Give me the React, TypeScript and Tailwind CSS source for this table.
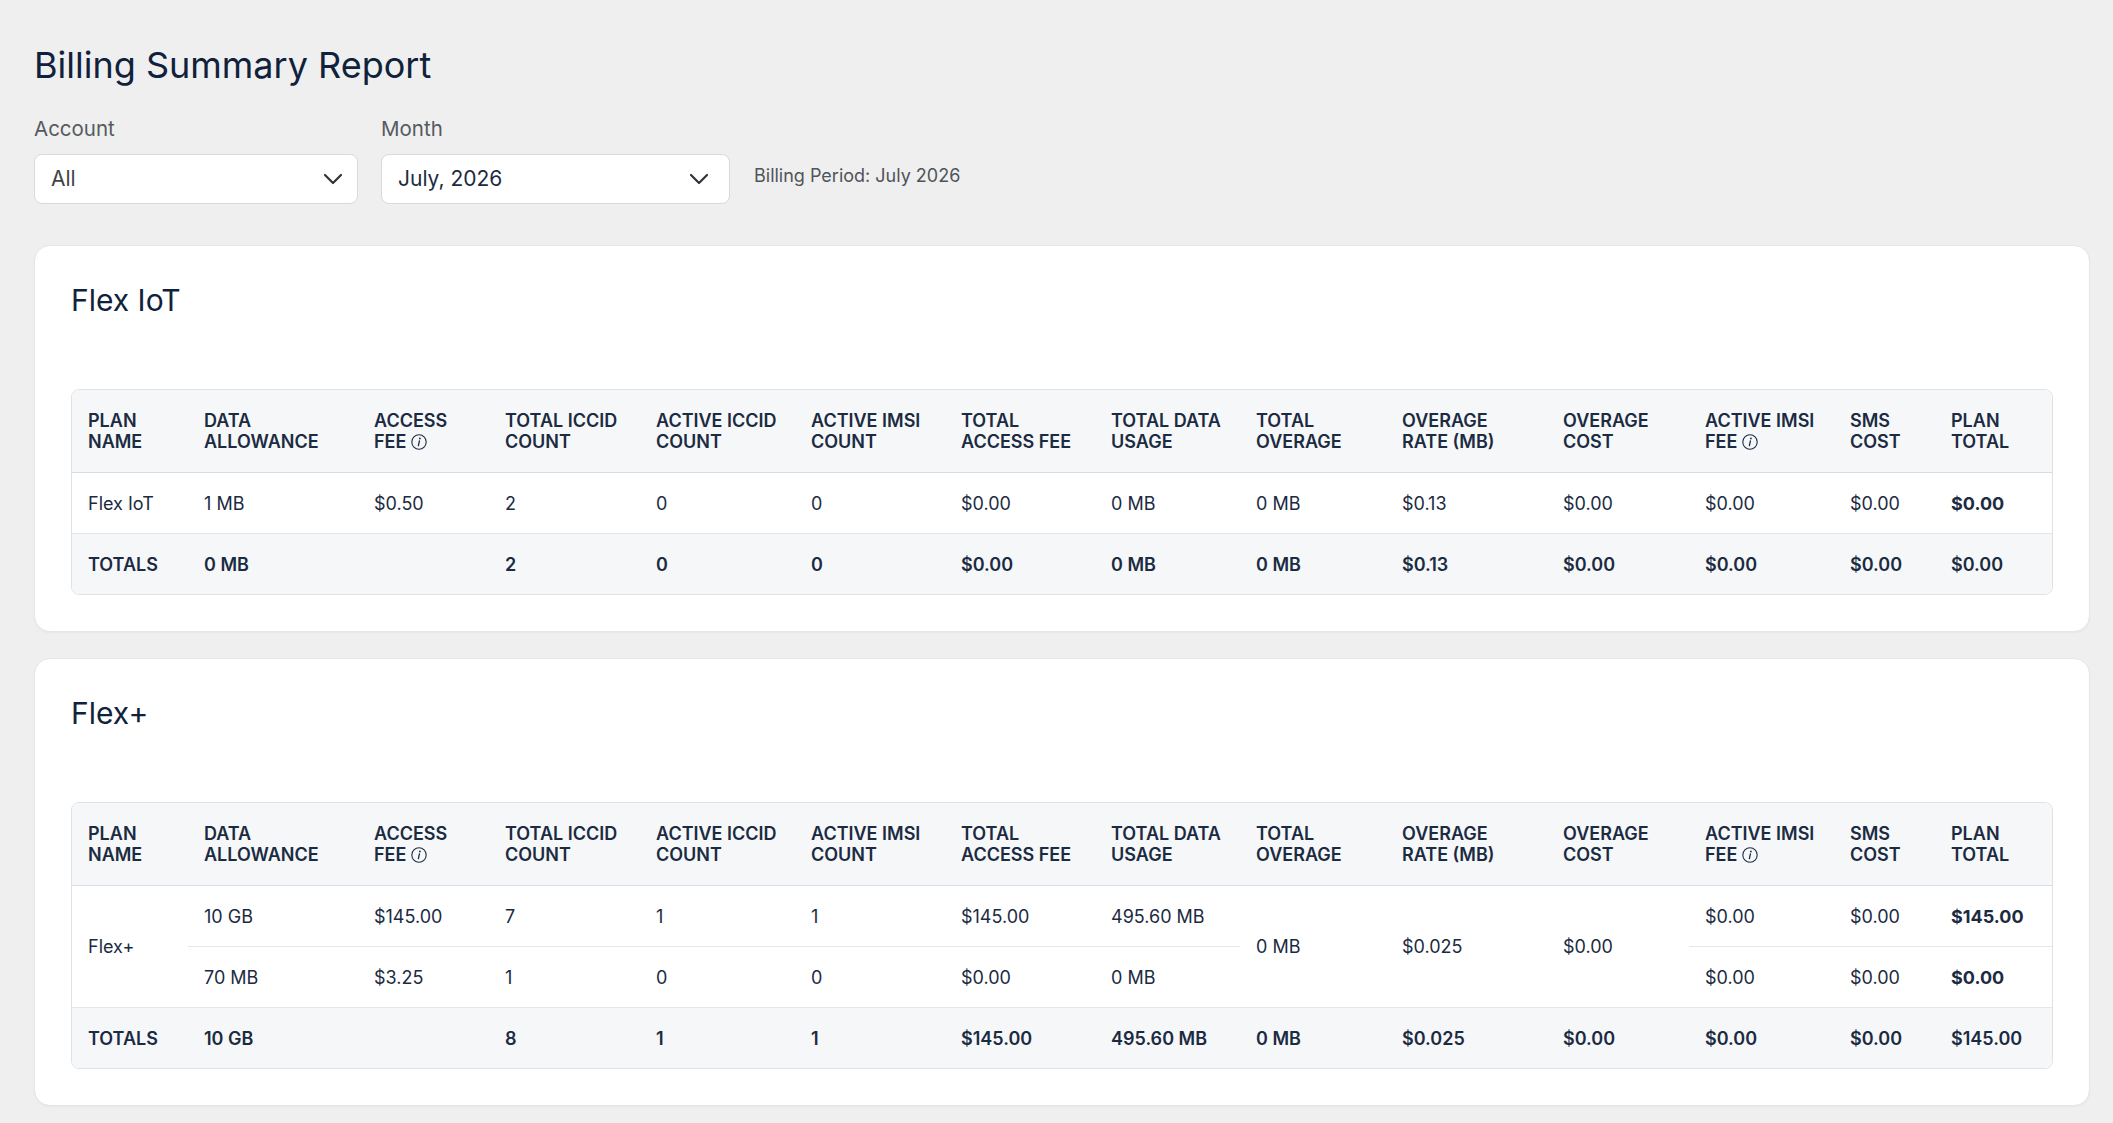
import { ChevronDown } from "lucide-react";

type Row = {
  data: string;
  access: string;
  totalIccid: string;
  activeIccid: string;
  activeImsi: string;
  totalAccess: string;
  usage: string;
  imsiFee: string;
  sms: string;
  total: string;
};

type Plan = {
  name: string;
  overage: string;
  rate: string;
  cost: string;
  rows: Row[];
  totals: string[];
};

const plans: Plan[] = [
  {
    name: "Flex IoT",
    overage: "0 MB",
    rate: "$0.13",
    cost: "$0.00",
    rows: [
      {
        data: "1 MB",
        access: "$0.50",
        totalIccid: "2",
        activeIccid: "0",
        activeImsi: "0",
        totalAccess: "$0.00",
        usage: "0 MB",
        imsiFee: "$0.00",
        sms: "$0.00",
        total: "$0.00",
      },
    ],
    totals: ["TOTALS", "0 MB", "", "2", "0", "0", "$0.00", "0 MB", "0 MB", "$0.13", "$0.00", "$0.00", "$0.00", "$0.00"],
  },
  {
    name: "Flex+",
    overage: "0 MB",
    rate: "$0.025",
    cost: "$0.00",
    rows: [
      {
        data: "10 GB",
        access: "$145.00",
        totalIccid: "7",
        activeIccid: "1",
        activeImsi: "1",
        totalAccess: "$145.00",
        usage: "495.60 MB",
        imsiFee: "$0.00",
        sms: "$0.00",
        total: "$145.00",
      },
      {
        data: "70 MB",
        access: "$3.25",
        totalIccid: "1",
        activeIccid: "0",
        activeImsi: "0",
        totalAccess: "$0.00",
        usage: "0 MB",
        imsiFee: "$0.00",
        sms: "$0.00",
        total: "$0.00",
      },
    ],
    totals: ["TOTALS", "10 GB", "", "8", "1", "1", "$145.00", "495.60 MB", "0 MB", "$0.025", "$0.00", "$0.00", "$0.00", "$145.00"],
  },
];

// [line 1, line 2, has info icon, column width]
const columns: [string, string, boolean, string][] = [
  ["PLAN", "NAME", false, "w-[116px]"],
  ["DATA", "ALLOWANCE", false, "w-[170px]"],
  ["ACCESS", "FEE", true, "w-[131px]"],
  ["TOTAL ICCID", "COUNT", false, "w-[151px]"],
  ["ACTIVE ICCID", "COUNT", false, "w-[155px]"],
  ["ACTIVE IMSI", "COUNT", false, "w-[150px]"],
  ["TOTAL", "ACCESS FEE", false, "w-[150px]"],
  ["TOTAL DATA", "USAGE", false, "w-[145px]"],
  ["TOTAL", "OVERAGE", false, "w-[146px]"],
  ["OVERAGE", "RATE (MB)", false, "w-[161px]"],
  ["OVERAGE", "COST", false, "w-[142px]"],
  ["ACTIVE IMSI", "FEE", true, "w-[145px]"],
  ["SMS", "COST", false, "w-[101px]"],
  ["PLAN", "TOTAL", false, "w-auto"],
];

function InfoIcon() {
  return (
    <svg viewBox="0 0 16 16" className="ml-[5px] inline-block h-[16px] w-[16px] align-[-2px]" fill="none">
      <circle cx="8" cy="8" r="7.2" stroke="currentColor" strokeWidth="1.1" />
      <circle cx="8.9" cy="4.5" r="0.9" fill="currentColor" />
      <path d="M8.4 6.9 L7.4 11.7" stroke="currentColor" strokeWidth="1.3" strokeLinecap="round" />
    </svg>
  );
}

function Select({ value, width, pad, muted }: { value: string; width: string; pad: string; muted?: boolean }) {
  return (
    <div
      className={`flex h-[50px] ${width} ${pad} items-center justify-between rounded-[8px] border border-[#d6d9dd] bg-white pl-[16px] text-[21px] ${
        muted ? "text-[#3f4247]" : "text-[#1b2b42]"
      }`}
    >
      <span>{value}</span>
      <ChevronDown className="h-[32px] w-[32px] text-[#2f3238]" strokeWidth={1.6} />
    </div>
  );
}

const cell = "whitespace-nowrap px-[16px] py-[19.5px] leading-[21px]";

function PlanCard({ plan }: { plan: Plan }) {
  const span = plan.rows.length;
  return (
    <section className="rounded-[16px] border border-[#e4e6e9] bg-white p-[36px] shadow-[0_1px_2px_rgba(0,0,0,0.04)]">
      <h2 className="mb-[71px] text-[30px] leading-[36px] text-[#10223b]">{plan.name}</h2>

      <div className="overflow-hidden rounded-[8px] border border-[#dfe2e6]">
        <table className="w-full table-fixed border-collapse text-left text-[18px] text-[#1b2b42]">
          <colgroup>
            {columns.map(([a, b, , w]) => (
              <col key={a + b} className={w} />
            ))}
          </colgroup>
          <thead className="bg-[#f6f7f9]">
            <tr className="border-b border-[#d9dde2]">
              {columns.map(([a, b, info]) => (
                <th key={a + b} className="whitespace-nowrap px-[16px] py-[20px] align-top font-semibold leading-[21px]">
                  {a}
                  <br />
                  {b}
                  {info && <InfoIcon />}
                </th>
              ))}
            </tr>
          </thead>
          <tbody>
            {plan.rows.map((r, i) => (
              <tr key={i} className="border-b border-[#e3e6ea]">
                {i === 0 && (
                  <td rowSpan={span} className={cell}>
                    {plan.name}
                  </td>
                )}
                <td className={cell}>{r.data}</td>
                <td className={cell}>{r.access}</td>
                <td className={cell}>{r.totalIccid}</td>
                <td className={cell}>{r.activeIccid}</td>
                <td className={cell}>{r.activeImsi}</td>
                <td className={cell}>{r.totalAccess}</td>
                <td className={cell}>{r.usage}</td>
                {i === 0 && (
                  <>
                    <td rowSpan={span} className={cell}>
                      {plan.overage}
                    </td>
                    <td rowSpan={span} className={cell}>
                      {plan.rate}
                    </td>
                    <td rowSpan={span} className={cell}>
                      {plan.cost}
                    </td>
                  </>
                )}
                <td className={cell}>{r.imsiFee}</td>
                <td className={cell}>{r.sms}</td>
                <td className={`${cell} font-bold`}>{r.total}</td>
              </tr>
            ))}
            <tr className="bg-[#f6f7f9] font-semibold">
              {plan.totals.map((v, i) => (
                <td key={i} className={cell}>
                  {v}
                </td>
              ))}
            </tr>
          </tbody>
        </table>
      </div>
    </section>
  );
}

export default function App() {
  return (
    <div className="min-h-screen bg-[#efefef] pl-[34px] pr-[23px] pt-[43px] font-['Inter',sans-serif]">
      <h1 className="text-[36px] leading-[44px] text-[#10223b]">Billing Summary Report</h1>

      <div className="mt-[28px] flex items-end gap-[23px]">
        <div>
          <label className="block text-[20.5px] leading-[28px] text-[#555a60]">Account</label>
          <div className="mt-[11px]">
            <Select value="All" width="w-[324px]" pad="pr-[8px]" muted />
          </div>
        </div>
        <div>
          <label className="block text-[20.5px] leading-[28px] text-[#555a60]">Month</label>
          <div className="mt-[11px]">
            <Select value="July, 2026" width="w-[349px]" pad="pr-[14px]" />
          </div>
        </div>
        <p className="mb-[16px] ml-[1px] text-[18px] leading-[24px] text-[#4f5459]">Billing Period: July 2026</p>
      </div>

      <div className="mt-[41px] flex flex-col gap-[26px]">
        {plans.map((p) => (
          <PlanCard key={p.name} plan={p} />
        ))}
      </div>
    </div>
  );
}
